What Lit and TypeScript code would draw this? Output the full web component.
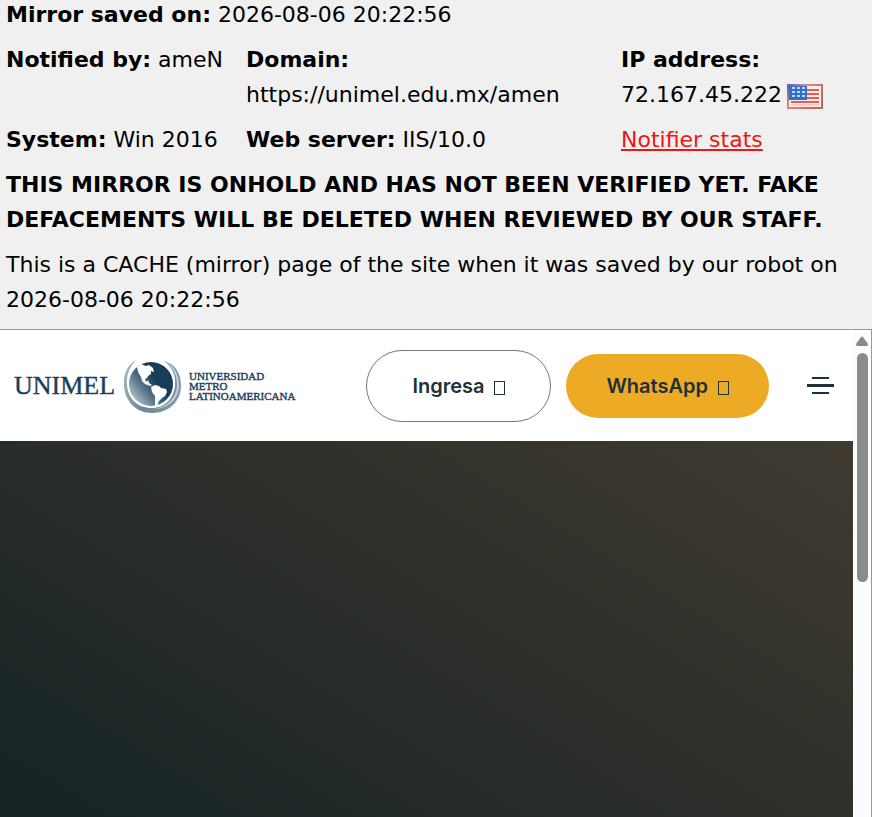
import { LitElement, html, css } from "lit";
import { customElement } from "lit/decorators.js";

@customElement("unimel-logo")
class UnimelLogo extends LitElement {
  static styles = css`
    :host { display: block; }
    .logo { display: flex; align-items: center; color: #1b3f5a; text-decoration: none;
      font-family: "Liberation Serif", serif; }
    .name { font-size: 26px; line-height: 30px; width: 109px; -webkit-text-stroke: 0.4px #1b3f5a; }
    .full { display: flex; flex-direction: column; font-size: 11px; line-height: 10px; margin-left: 8px;
      white-space: nowrap; -webkit-text-stroke: 0.4px #1b3f5a; }
    .globe { display: block; width: 58px; height: 56px; flex: none; }
  `;
  render() {
    return html`
      <a class="logo" href="#" aria-label="UNIMEL Universidad Metro Latinoamericana">
        <span class="name">UNIMEL</span>
        <svg class="globe" viewBox="0 0 58 56" aria-hidden="true">
          <defs>
            <linearGradient id="sea" x1="0.1" y1="0.8" x2="0.6" y2="0.4">
              <stop offset="0" stop-color="#a9b8c4" />
              <stop offset="0.45" stop-color="#5c788c" />
              <stop offset="1" stop-color="#173d59" />
            </linearGradient>
            <linearGradient id="ring" x1="0" y1="0.3" x2="1" y2="0.7">
              <stop offset="0" stop-color="#9fb1bd" />
              <stop offset="0.5" stop-color="#6b8699" />
              <stop offset="1" stop-color="#8299a8" />
            </linearGradient>
          </defs>
          <path fill="url(#ring)" d="M13 2C4 7 0 17 1 28C2 44 14 55 29 55C45 55 58 44 58 28C58 15 52 6 41 3C49 9 53 17 52 27C51 41 41 50 29 50C14 50 5 40 4 27C3 17 7 8 13 2Z" />
          <path fill="#c5d0d8" d="M41 3C49 8 54 16 54 27C54 41 42 50 31 51C45 51 56 41 56 27C56 15 50 6 41 3Z" />
          <circle cx="28" cy="26" r="22" fill="url(#sea)" />
          <path fill="#fff" d="M14 9L18 6L23 8L26 7L30 10L31 14L28 13L28 16L25 18L24 20L22 21L23 24L25 22L26 25L29 27L27 28L22 26L19 23L18 19L15 14Z" />
          <path fill="#fff" d="M28 29L32 27L36 28L38 30L43 31L44 34L42 38L39 40L36 43L34 48L32 48L32 43L32 38L29 34Z" />
        </svg>
        <span class="full"><span>UNIVERSIDAD</span><span>METRO</span><span>LATINOAMERICANA</span></span>
      </a>`;
  }
}

@customElement("mirrored-site")
class MirroredSite extends LitElement {
  static styles = css`
    :host { display: flex; flex: 1; border: 1px solid #999; border-width: 1px 1px 0 0; background: #fff; }
    .page { flex: 1; display: flex; flex-direction: column; min-width: 0; }
    .bar { display: flex; align-items: center; height: 111px; padding: 0 16px 0 14px; box-sizing: border-box; }
    unimel-logo { margin-right: auto; }
    .pill { display: flex; align-items: center; justify-content: center; gap: 10px;
      border: none; padding: 0 40px; height: 64px; border-radius: 32px; background: #edab25; color: #1d3138;
      font: 600 20px/24px "Inter", sans-serif; cursor: pointer; }
    .outline { height: 72px; padding: 0 45px; border: 1px solid #777; border-radius: 36px;
      background: #fff; margin-right: 15px; }
    .box { width: 9px; height: 12px; border: 1px solid currentColor; margin-top: 4px; }
    .menu { display: flex; flex-direction: column; align-items: center; gap: 5px; border: none;
      background: none; padding: 0; margin: 0 3px 0 38px; cursor: pointer; }
    .line { width: 17px; height: 2px; background: #1d3138; }
    .long { width: 27px; height: 3px; }
    .hero { flex: 1; background: linear-gradient(32deg, #182324 0%, #1b2626 15%, #292d2a 42%, #30312b 62%, #403a31 100%); }
    .track { width: 18px; background: #fcfcfc; display: flex; flex-direction: column; align-items: center; }
    .arrow { display: block; width: 12px; height: 10px; margin: 6px 0 7px; }
    .thumb { width: 11px; height: 229px; border-radius: 6px; background: #8b8b8b; }
  `;
  render() {
    return html`
      <div class="page">
        <header class="bar">
          <unimel-logo></unimel-logo>
          <button class="pill outline">Ingresa <span class="box"></span></button>
          <button class="pill">WhatsApp <span class="box"></span></button>
          <button class="menu" aria-label="Menu">
            <span class="line"></span><span class="line long"></span><span class="line"></span>
          </button>
        </header>
        <main class="hero"></main>
      </div>
      <div class="track" aria-hidden="true">
        <svg class="arrow" viewBox="0 0 12 10">
          <path d="M5 1Q6 0 7 1L12 8Q12 10 11 10H1Q0 10 0 8Z" fill="#8b8b8b" />
        </svg>
        <div class="thumb"></div>
      </div>`;
  }
}

@customElement("app-root")
class AppRoot extends LitElement {
  static styles = css`
    :host { display: flex; flex-direction: column; height: 100vh; overflow: hidden; background: #f0f0f0;
      color: #000; font: 22px/35px "DejaVu Sans", Verdana, sans-serif; }
    .info { display: flex; flex-direction: column; gap: 10px; margin-top: -3px; padding: 0 6px 12px; }
    .row { display: grid; grid-template-columns: 240fr 375fr 245fr; }
    p { margin: 0; }
    a { color: #f01414; }
    .address { display: flex; align-items: center; gap: 5px; }
    .flag { display: block; width: 36px; height: 25px; margin-top: 3px; }
  `;
  render() {
    return html`
      <section class="info">
        <p><b>Mirror saved on:</b> 2026-08-06 20:22:56</p>
        <div class="row">
          <p><b>Notified by:</b> ameN</p>
          <p><b>Domain:</b><br />https://unimel.edu.mx/amen</p>
          <div>
            <b>IP address:</b>
            <div class="address">72.167.45.222
              <svg class="flag" viewBox="0 0 36 25" role="img" aria-label="United States">
                <defs>
                  <linearGradient id="edge" x1="0" y1="0" x2="1" y2="0.6">
                    <stop offset="0" stop-color="#5a5cc4" />
                    <stop offset="0.4" stop-color="#d98a80" />
                    <stop offset="1" stop-color="#b9685a" />
                  </linearGradient>
                </defs>
                <rect width="36" height="25" fill="url(#edge)" />
                <rect x="2" y="2" width="32" height="21" fill="#fbeeec" />
                <path d="M20 6H32M20 10H32M20 14H32M4 18H32" stroke="#f0564e" stroke-width="2" />
                <path d="M4 21H32" stroke="#f3a8a0" stroke-width="1" />
                <rect x="2" y="2" width="18" height="14" fill="#2f6fd0" />
                <path d="M5 4H19M5 8H19M5 12H19" stroke="#c3d8f8" stroke-width="2" stroke-dasharray="3 2" />
              </svg>
            </div>
          </div>
        </div>
        <div class="row">
          <p><b>System:</b> Win 2016</p>
          <p><b>Web server:</b> IIS/10.0</p>
          <p><a href="#">Notifier stats</a></p>
        </div>
        <p><b>THIS MIRROR IS ONHOLD AND HAS NOT BEEN VERIFIED YET. FAKE DEFACEMENTS WILL BE DELETED WHEN REVIEWED BY OUR STAFF.</b></p>
        <p>This is a CACHE (mirror) page of the site when it was saved by our robot on 2026-08-06 20:22:56</p>
      </section>
      <mirrored-site></mirrored-site>`;
  }
}
